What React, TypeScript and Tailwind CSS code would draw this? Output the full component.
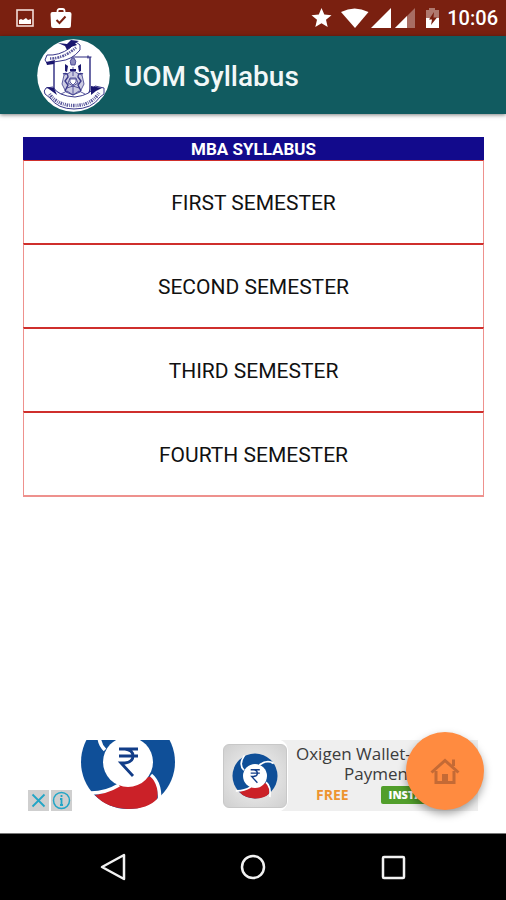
import type { ReactNode } from "react";

const semesters = [
  "FIRST SEMESTER",
  "SECOND SEMESTER",
  "THIRD SEMESTER",
  "FOURTH SEMESTER",
];

const StatusBar = () => (
  <div className="flex h-9 items-center justify-between bg-[#7a2010] pr-2 pl-4 font-['Roboto',sans-serif] text-white">
    <div className="flex items-center gap-4">
      <svg width="18" height="18" viewBox="0 0 18 18" aria-hidden="true">
        <rect x="1" y="1" width="16" height="16" fill="none" stroke="#f2dcd8" strokeWidth="1.6" />
        <path d="M3 15v-4l2-1 2 1 3-2 2 2 3-1v5z" fill="#fff" />
      </svg>
      <svg width="22" height="20" viewBox="0 0 22 20" aria-hidden="true">
        <path d="M7.500 5V3a2 2 0 0 1 2-2h3a2 2 0 0 1 2 2v2" fill="none" stroke="#fff" strokeWidth="1.8" />
        <path d="M2.500 4h17a2 2 0 0 1 2 2l-.6 12a2 2 0 0 1-2 2H3.100a2 2 0 0 1-2-2L.5 6a2 2 0 0 1 2-2z" fill="#fff" />
        <path d="M6.500 12l3 3 6-6.500" fill="none" stroke="#7a2010" strokeWidth="2" />
      </svg>
    </div>
    <div className="flex items-center gap-2">
      <div className="flex items-center">
        <svg width="116" height="22" viewBox="0 0 116 22" aria-hidden="true">
          <path d="M2.500 8.200l7.300-.7L12.500 1l2.800 6.500 7.200.7-5.500 4.600L18.700 20l-6.200-3.800L6.300 20 8 12.800z" fill="#fff" />
          <path d="M32 5q13.500-7 27.500 0L46 21z" fill="#fff" />
          <path d="M62 21L82 1v20z" fill="#fff" />
          <path d="M86 21L106 1v20z" fill="#fff" fillOpacity=".35" />
          <path d="M86 21L98 9v12z" fill="#fff" />
        </svg>
        <svg width="14" height="22" viewBox="0 0 14 22" aria-hidden="true">
          <path d="M1 3h3V1h6v2h4v8H1z" fill="#fff" fillOpacity=".4" />
          <path d="M1 11h13v10H1z" fill="#fff" />
          <path d="M9 5l-5 7.500h3L6 18l6-7.500H8.500z" fill="#7a2010" />
        </svg>
      </div>
      <span className="text-xl font-medium">10:06</span>
    </div>
  </div>
);

const Emblem = () => (
  <svg width="73" height="73" viewBox="1 1 73 73" role="img" aria-label="University emblem">
    <circle cx="37.500" cy="37.500" r="36.300" fill="#fff" />
    {/* shield */}
    <g fill="none" stroke="#2c2a80">
      <path d="M18 22v29q3 6 9 7l8 3 3 3 3-3 8-3q5-2 5-7V19" strokeWidth="1.400" />
      <path d="M34 19h21.500M52 17.500v3" strokeWidth="1.200" />
    </g>
    {/* lions and crest */}
    <g fill="#8d8bbe" stroke="#3a388a" strokeWidth=".8">
      <path d="M36 20q-3 3-1 7h4q2-4-1-7z" />
      <path d="M33 35q4-4 8 0l5 2 2 9-4 8-7 3-7-3-4-8 2-9z" fillOpacity=".45" />
      <path d="M27 36q5-2 5 3l-3 4 3 4-3 6M47 36q-5-2-5 3l3 4-3 4 3 6" fill="none" strokeWidth="1.400" />
      <path d="M37 29v9M34 40h6l2 5-5 3-5-3zM31 50l6-2 6 2M37 48v8M25 56l6-3 6 4 6-4 6 3" fill="none" />
      <path d="M34 41h6v3l-3 3-3-3z" fill="#fff" />
    </g>
    <g fill="#1a166f">
      <path d="M29 26l3 2-1 6-2-1zM45 26l-3 2 1 6 2-1zM34 31h6v2h-6z" />
      <path d="M33 60l5 3 5-3-1 3-4 3-4-3z" />
    </g>
    {/* motto scroll with the bird above it */}
    <path d="M9 22l2-5q12 1 23-7l6-6 4 3v5q-8 10-20 11l-13 2z" fill="#fff" stroke="#3a388a" />
    <path d="M14 20.500q14 0 26-11" fill="none" stroke="#5a589c" strokeWidth="2.600" strokeDasharray="1.300 1 2 .8" />
    <path d="M22 5l9 1 4-4 8 1-4 2 2 2-6 2-4 3-2-4zM10 24l9-2-1 4-7 1z" fill="#1a166f" />
    {/* name ribbon */}
    <path d="M10 50q-3 3-1 6l5 4q8 11 24 11 18 0 26-12l4-3v-6l-9-2q-4 9-20 11-17-1-22-10z" fill="#fff" stroke="#3a388a" />
    <path d="M10 49l8 1 3 7-4-3zM55 48l11 2-6 3-5 4z" fill="#1a166f" />
    <path
      d="M13.500 56q8 11.500 24.500 11.500 17 0 25-12.500"
      fill="none"
      stroke="#5a589c"
      strokeWidth="3.400"
      strokeDasharray="1 .9 1.600 1 .8 1"
    />
  </svg>
);

const WalletLogo = () => (
  <g>
    <circle r="47" fill="#0f4f98" />
    <path d="M-33 33Q-20 31-9 23L24 14Q32 24 29 37Q20 47 0 47Q-22 46-33 33z" fill="#cb2128" />
    <g fill="none" stroke="#fff" strokeWidth="3.500">
      <path d="M-40 31Q-24 32-9 23" />
      <path d="M23 13Q34 22 31 44" />
      <path d="M-23-12Q-35-24-22-43" />
      <path d="M9-23Q26-35 39-26" />
    </g>
    <circle r="25" fill="#fff" />
    <path d="M-9-13H10M-9-6H10M-8-13H-3Q5-12 5-6T-3 1H-7L5 14" fill="none" stroke="#123d88" strokeWidth="2.800" />
  </g>
);

const AdBanner = () => (
  <aside aria-label="Advertisement" className="flex h-[71px] w-[450px] justify-between">
    <div className="flex items-end gap-2">
      <div className="flex gap-0.5">
        <button type="button" aria-label="Close ad" className="flex size-[21px] items-center justify-center bg-[#cfcfcf]">
          <svg width="15" height="15" viewBox="0 0 15 15">
            <path d="M1.500 1.500l12 12M13.500 1.500l-12 12" stroke="#22a5c6" strokeWidth="1.800" />
          </svg>
        </button>
        <button type="button" aria-label="Ad information" className="flex size-[21px] items-center justify-center bg-[#cfcfcf]">
          <svg width="19" height="19" viewBox="0 0 19 19" fill="none" stroke="#22a5c6">
            <circle cx="9.500" cy="9.500" r="8" strokeWidth="1.500" />
            <path d="M9.500 4v2M8 8h1.500v6M8 14h3" strokeWidth="1.800" />
          </svg>
        </button>
      </div>
      <svg width="96" height="71" viewBox="-48 -22 96 71" aria-hidden="true">
        <WalletLogo />
      </svg>
    </div>
    <div className="flex w-[257px] bg-[#efefef]">
      <div className="-my-px flex w-[67px] items-center justify-center rounded-r-xl bg-white">
        <div className="flex size-16 items-center justify-center rounded-md border border-[#c8c8c8] bg-radial from-[#f5f5f5] to-[#cfcfcf]">
          <svg width="46" height="46" viewBox="-48 -48 96 96" aria-hidden="true">
            <WalletLogo />
          </svg>
        </div>
      </div>
      <div className="flex-1 px-2 pt-1 font-['Open_Sans',sans-serif]">
        <p className="text-[17px] leading-5 whitespace-nowrap text-[#3c3c3c]">Oxigen Wallet-</p>
        <p className="pl-12 text-[17px] leading-5 text-[#3c3c3c]">Payments</p>
        <div className="flex items-center gap-8 pt-0.5 pl-5">
          <span className="text-sm leading-[18px] font-bold text-[#ed9430]">FREE</span>
          <button type="button" className="h-[18px] w-20 rounded-xs bg-[#519e2b] px-2 text-left text-[11px] font-extrabold text-white">
            INSTALL
          </button>
        </div>
      </div>
    </div>
  </aside>
);

const NavButton = ({ label, children }: { label: string; children: ReactNode }) => (
  <button type="button" aria-label={label} className="flex h-full w-[140px] items-center justify-center">
    <svg width="28" height="28" viewBox="0 0 28 28" fill="none" stroke="#f2f2f2" strokeWidth="2.500" strokeLinejoin="round">
      {children}
    </svg>
  </button>
);

export default function App() {
  return (
    <div className="flex min-h-screen flex-col bg-white">
      <StatusBar />
      <header className="flex h-[78px] items-center gap-3.5 bg-[#115b60] pl-[37px] shadow-[0_1px_4px_rgba(0,0,0,0.5)]">
        <Emblem />
        <h1 className="pt-1 font-['Roboto',sans-serif] text-[28px] font-medium text-[#f2f8f8]">UOM Syllabus</h1>
      </header>

      <main className="flex flex-1 flex-col font-['Roboto',sans-serif]">
        <section className="mr-[22px] ml-[23px] pt-[23px]">
          <h2 className="h-[23px] bg-[#120a8c] text-center text-[17px] leading-6 font-bold text-white">MBA SYLLABUS</h2>
          <ul className="border-x border-b-2 border-[#ee918d]">
            {semesters.map((semester) => (
              <li key={semester} className="-mx-px border-x border-t-2 border-x-[#ee918d] border-t-[#cf2f2c] first:border-t">
                <button type="button" className="h-[82px] w-full pt-1 text-center text-[21px] text-[#111]">
                  {semester}
                </button>
              </li>
            ))}
          </ul>
        </section>

        <div className="relative mt-auto flex justify-center pb-[22px]">
          <AdBanner />
          <button
            type="button"
            aria-label="Home"
            className="absolute right-[22px] bottom-[23px] flex size-[78px] items-center justify-center rounded-full bg-[#ff8b40] shadow-[0_4px_8px_rgba(0,0,0,0.35)]"
          >
            <svg width="30" height="28" viewBox="0 0 30 28" fill="none" stroke="#c46a35" strokeWidth="3" aria-hidden="true">
              <path d="M1.500 15.500L15 3.500l13.500 12" />
              <path d="M6 14v11.500h18V14M23.500 9V2.500" />
              <path d="M12 17h6v8h-6z" fill="#c46a35" stroke="none" />
            </svg>
          </button>
        </div>
      </main>

      <nav aria-label="System" className="flex h-[67px] justify-center border-t border-[#777] bg-black">
        <NavButton label="Back">
          <path d="M25 2v24L3 14z" />
        </NavButton>
        <NavButton label="Home screen">
          <circle cx="14" cy="14" r="11" />
        </NavButton>
        <NavButton label="Recent apps">
          <rect x="4" y="4" width="21" height="21" rx="1" />
        </NavButton>
      </nav>
    </div>
  );
}
